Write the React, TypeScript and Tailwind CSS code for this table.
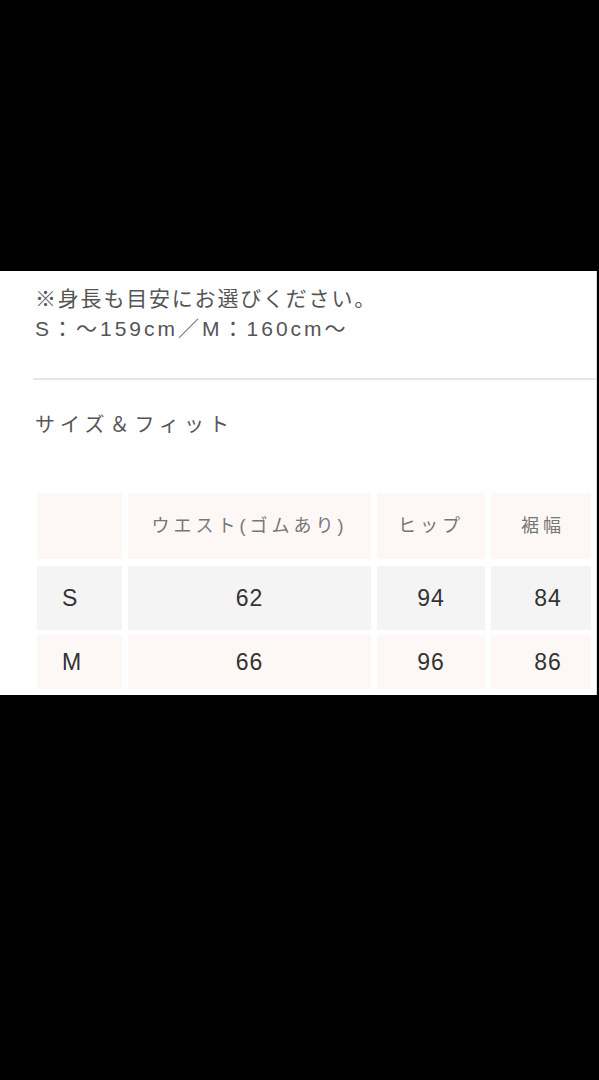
import React from 'react';

const font = { fontFamily: '"Liberation Sans", "Noto Sans CJK JP", sans-serif' };

const heads = ['', 'ウエスト(ゴムあり)', 'ヒップ', '裾幅'];
const rows = [
  { size: 'S', values: ['62', '94', '84'], bg: 'bg-[#f4f4f4]', h: 'h-[64px]' },
  { size: 'M', values: ['66', '96', '86'], bg: 'bg-[#fdf7f5]', h: 'h-[54px]' },
];

const App: React.FC = () => {
  return (
    <div className="w-[599px] h-[1080px] bg-black pt-[271px]" style={font}>
      <div className="w-[597px] h-[424px] bg-white overflow-hidden border-r border-[#d8d8d8] pt-[13px]">
        <div className="pl-[35px] text-[21px] leading-[30px] text-[#555]">
          <p className="tracking-[1.8px]">※身長も目安にお選びください。</p>
          <p className="tracking-[3px]">S：～159cm／M：160cm～</p>
        </div>

        <div className="ml-[33px] mt-[34px] h-[2px] bg-[#e6e6e6]" />

        <h2 className="pl-[35px] mt-[30px] text-[20px] leading-[30px] tracking-[5px] text-[#555]">
          サイズ＆フィット
        </h2>

        <div className="ml-[37px] mt-[53px] grid grid-cols-[85px_243px_108px_100px] gap-x-[6px]">
          {heads.map((h, i) => (
            <div
              key={i}
              className={`h-[66px] mb-[7px] bg-[#fdf7f5] flex items-center justify-center text-[18px] tracking-[4px] text-[#777] ${i === 3 ? 'pl-[4px]' : ''}`}
            >
              {h}
            </div>
          ))}
          {rows.map((r) => (
            <React.Fragment key={r.size}>
              <div className={`${r.h} mb-[5px] ${r.bg} flex items-center pl-[25px] text-[23px] text-[#333]`}>
                {r.size}
              </div>
              {r.values.map((v, j) => (
                <div
                  key={j}
                  className={`${r.h} mb-[5px] ${r.bg} flex items-center justify-center text-[23px] tracking-[1px] text-[#333] ${j === 2 ? 'pl-[14px]' : ''}`}
                >
                  {v}
                </div>
              ))}
            </React.Fragment>
          ))}
        </div>
      </div>
    </div>
  );
};

export default App;
